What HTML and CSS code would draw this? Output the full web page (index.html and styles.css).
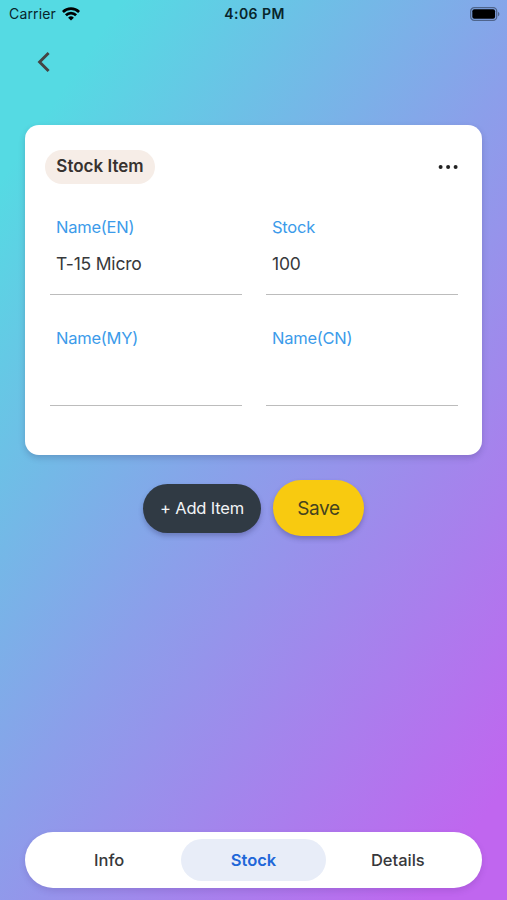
FILE: index.html
```
<!DOCTYPE html>
<html lang="en">
<head>
<meta charset="UTF-8">
<meta name="viewport" content="width=device-width">
<title>Stock Item</title>
<link rel="stylesheet" href="styles.css">
</head>
<body>
<div class="screen">
  <div class="status">
    <div class="carrier">
      <span>Carrier</span>
      <svg width="18" height="14" viewBox="0 0 18 14" fill="none" stroke="#000" stroke-width="2.7">
        <path d="M0.9 5a11.4 11.4 0 0 1 16.2 0"/>
        <path d="M3.9 8.3a7.2 7.2 0 0 1 10.2 0"/>
        <path d="M9 13.6L6.1 10.7a4.1 4.1 0 0 1 5.8 0z" fill="#000" stroke="none"/>
      </svg>
    </div>
    <span class="time">4:06 PM</span>
    <div class="battery">
      <svg width="30" height="14" viewBox="0 0 30 14">
        <rect x="0.7" y="0.7" width="26" height="12.6" rx="3.6" fill="none" stroke="#000" stroke-opacity="0.4" stroke-width="1.3"/>
        <rect x="2.3" y="2.3" width="22.8" height="9.4" rx="2" fill="#000"/>
        <path d="M28 4.7c1.9 0.8 1.9 3.8 0 4.6z" fill="#000" fill-opacity="0.4"/>
      </svg>
    </div>
  </div>

  <div class="header">
    <svg class="back" width="14" height="22" viewBox="0 0 14 22" fill="none" stroke="#444" stroke-width="2.9">
      <path d="M11.6 2L2.6 11l9 9"/>
    </svg>
  </div>

  <div class="card">
    <div class="card-top">
      <span class="badge">Stock Item</span>
      <svg width="20" height="6" viewBox="0 0 20 6" fill="#222">
        <circle cx="2.6" cy="3" r="2"/>
        <circle cx="10.1" cy="3" r="2"/>
        <circle cx="17.6" cy="3" r="2"/>
      </svg>
    </div>
    <div class="fields">
      <div class="field">
        <div class="label">Name(EN)</div>
        <div class="value">T-15 Micro</div>
      </div>
      <div class="field">
        <div class="label">Stock</div>
        <div class="value">100</div>
      </div>
      <div class="field">
        <div class="label">Name(MY)</div>
        <div class="value"></div>
      </div>
      <div class="field">
        <div class="label">Name(CN)</div>
        <div class="value"></div>
      </div>
    </div>
  </div>

  <div class="actions">
    <div class="btn add">+ Add Item</div>
    <div class="btn save">Save</div>
  </div>

  <div class="tabs">
    <div class="tab">Info</div>
    <div class="tab active">Stock</div>
    <div class="tab">Details</div>
  </div>
</div>
</body>
</html>
```
FILE: styles.css
```
* {
  box-sizing: border-box;
}
body {
  margin: 0;
  font-family: Inter, "Liberation Sans", sans-serif;
  color: #37383b;
}
.screen {
  width: 507px;
  height: 900px;
  display: flex;
  flex-direction: column;
  background: linear-gradient(124deg, #55dae3 11%, #8b9fea 50%, #c066ef 93%);
}
.status {
  height: 27px;
  padding: 0 7px 0 9px;
  display: grid;
  grid-template-columns: 1fr auto 1fr;
  align-items: center;
  color: #08252b;
}
.carrier {
  display: flex;
  align-items: center;
  gap: 6px;
  font-size: 14px;
  letter-spacing: 0.15px;
}
.time {
  font-size: 14px;
  font-weight: 600;
  letter-spacing: 0.45px;
}
.battery {
  display: flex;
  justify-content: flex-end;
}
.header {
  height: 98px;
  padding: 24px 0 0 37px;
}
.back {
  display: block;
}
.card {
  height: 330px;
  margin: 0 25px;
  padding: 25px 24px 0 20px;
  background: #fff;
  border-radius: 14px;
  box-shadow: 0 3px 6px rgba(40, 40, 90, 0.22);
}
.card-top {
  display: flex;
  align-items: center;
  justify-content: space-between;
}
.badge {
  width: 110px;
  height: 34px;
  line-height: 33px;
  border-radius: 17px;
  background: #f6ede7;
  text-align: center;
  font-size: 17px;
  font-weight: 600;
  color: #37322f;
}
.fields {
  display: grid;
  grid-template-columns: 1fr 1fr;
  column-gap: 24px;
  row-gap: 29px;
  padding: 29px 0 0 5px;
}
.field {
  height: 82px;
  padding-left: 6px;
  border-bottom: 1px solid #bcbcbc;
}
.label {
  height: 28px;
  line-height: 28px;
  font-size: 16.5px;
  letter-spacing: -0.25px;
  color: #3c9bea;
}
.value {
  height: 45px;
  line-height: 45px;
  font-size: 17.5px;
  letter-spacing: -0.2px;
}
.actions {
  display: flex;
  justify-content: center;
  align-items: center;
  gap: 12px;
  margin-top: 25px;
}
.btn {
  display: flex;
  align-items: center;
  justify-content: center;
  box-shadow: 0 3px 5px rgba(40, 40, 90, 0.3);
}
.add {
  width: 118px;
  height: 49px;
  border-radius: 25px;
  background: #303a44;
  color: #f2f4f6;
  font-size: 16.5px;
  letter-spacing: -0.2px;
}
.save {
  width: 91px;
  height: 56px;
  border-radius: 28px;
  background: #f8ca10;
  color: #45431f;
  font-size: 19px;
  letter-spacing: -0.4px;
}
.tabs {
  display: grid;
  grid-template-columns: repeat(3, 1fr);
  height: 56px;
  margin: auto 25px 12px;
  padding: 7px 12px;
  border-radius: 28px;
  background: #fff;
  box-shadow: 0 3px 6px rgba(60, 30, 110, 0.15);
}
.tab {
  height: 42px;
  line-height: 42px;
  border-radius: 21px;
  text-align: center;
  font-size: 16.5px;
  font-weight: 500;
}
.active {
  background: #e8edf8;
  color: #1f67d8;
  font-weight: 600;
}
```
